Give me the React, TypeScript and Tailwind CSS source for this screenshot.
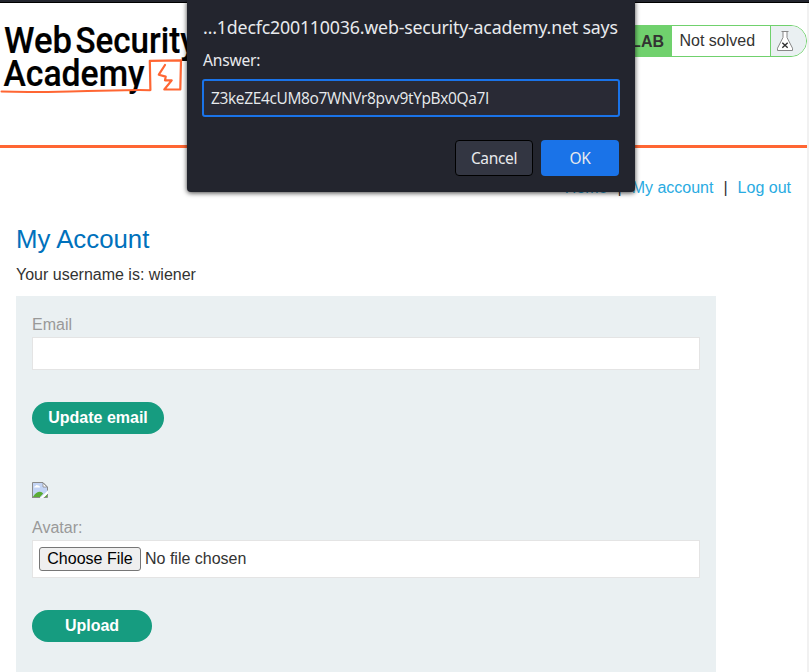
function Logo() {
  return (
    <svg width="190" height="80" viewBox="0 20 190 80" className="block" role="img">
      <g fill="#000" stroke="#000" strokeWidth="0.2" fontFamily="Roboto, sans-serif" fontSize="37" fontWeight="500">
        <text x="4" y="53.1" textLength="68" lengthAdjust="spacingAndGlyphs">Web</text>
        <text x="75.5" y="53.1" textLength="121" lengthAdjust="spacingAndGlyphs">Security</text>
        <text x="3.5" y="85.8" textLength="141" lengthAdjust="spacingAndGlyphs">Academy</text>
      </g>
      <path d="M184 58h5v3h-5z" fill="#000" />
      <g fill="none" stroke="#ff6633" strokeLinejoin="round" strokeLinecap="round">
        <path d="M1.5 91.6 C40 93 70 91 100 90.8 S125 89.8 150 90.2" strokeWidth="2" />
        <path d="M150.4 90 L149.8 60.8 L181 60.3 L180.3 89.4 L164.3 89.5 L171.7 80.4 L165 80.3 L165.7 76.6 L158.8 74.7 L165 65" strokeWidth="2.2" />
      </g>
    </svg>
  );
}

function Flask() {
  return (
    <svg width="18" height="22" viewBox="0 0 18 22" fill="none" stroke="#888" strokeWidth="1">
      <path d="M5.5 1.5h7M7 1.5v6L1.5 18.2v2.3h15v-2.3L11 7.5v-6" fill="#fff" />
      <path d="M6.3 12.8l5.4 5M11.7 12.8l-5.4 5" stroke="#333" strokeWidth="1.4" />
    </svg>
  );
}

function BrokenImage() {
  return (
    <svg width="16" height="16" viewBox="0 0 16 16" className="block">
      <path d="M.5 .5h10.5l4.5 4.5v4L9 15.5H.5z" fill="#c3d4f5" />
      <path d="M2 5.5q0-1.5 1.5-1.5Q4.5 2.2 6 3.5q2-.2 2 2z" fill="#fff" />
      <path d="M1 15.5V14.8Q4.5 9.5 8 9.8q2 .2 3.2 1.8L7.5 15.5z" fill="#5aac35" />
      <path d="M.5 15.5V.5H11l4.5 4.5v3.5M0 15.5H8M11.5 15.5h4v-3.5" fill="none" stroke="#8b8b8b" />
      <path d="M11 1v4h4z" fill="#fff" stroke="#8b8b8b" strokeWidth=".8" />
      <path d="M12.5 15l2.5-2.5V15z" fill="#5aac35" />
      <path d="M8 16l8-7.2v2.4L11 16z" fill="#fff" />
    </svg>
  );
}

function LabStatus() {
  return (
    <div className="flex h-8 w-[206px] overflow-hidden rounded-r-full border border-[#70d16d]">
      <div className="flex w-[70px] items-center justify-end bg-[#70d16d] pt-px pr-2 font-bold">LAB</div>
      <div className="flex w-[98px] items-center bg-white pl-[7.5px]">Not solved</div>
      <div className="flex flex-1 items-center border-l border-[#70d16d] bg-[#eaf0f2] pl-[5px]">
        <Flask />
      </div>
    </div>
  );
}

function Prompt() {
  return (
    <div className="absolute top-0 left-[187px] h-48 w-[448px] rounded-b-[4px] bg-[#23252e] px-4 pt-[15px] font-['Noto_Sans',sans-serif] text-[#e8eaed] shadow-[0_1px_5px_rgba(0,0,0,0.75)]">
      <div className="h-6 text-[17.8px] leading-6 tracking-[-0.2px] whitespace-nowrap">…1decfc200110036.web-security-academy.net says</div>
      <div className="mt-[11px] h-5 text-[15.6px] leading-5 tracking-[-0.2px]">Answer:</div>
      <div className="-mx-px mt-[9px] flex h-[38px] items-center rounded-[3px] border-2 border-[#1a73e8] bg-[#292a35] px-[7px] font-['Open_Sans',sans-serif] text-[15.5px] leading-5 tracking-[-0.36px]">
        Z3keZE4cUM8o7WNVr8pvv9tYpBx0Qa7I
      </div>
      <div className="mt-[23px] flex justify-end gap-2 text-[15.5px] leading-5 tracking-[-0.35px]">
        <button className="h-9 w-[78px] rounded-[4px] border border-black bg-[#333642]">Cancel</button>
        <button className="h-9 w-[78px] rounded-[4px] bg-[#1a73e8]">OK</button>
      </div>
    </div>
  );
}

export default function App() {
  return (
    <div className="relative flex h-[672px] w-[809px] flex-col overflow-hidden bg-white font-['Liberation_Sans',Arial,sans-serif] text-base leading-5 text-[#333332]">
      <div className="h-[3px] shrink-0 border-b border-black bg-[#23252e]" />
      <div className="flex min-h-0 flex-1">
        <div className="flex w-[807px] flex-col">
          <header className="flex h-[145px] shrink-0 justify-between border-b-[3px] border-[#ff6633]">
            <div className="pt-[17px]"><Logo /></div>
            <div className="pt-[22px]"><LabStatus /></div>
          </header>
          <nav className="flex h-[79px] shrink-0 items-start justify-end pt-[30px] pr-4 text-[#29abe2]">
            <a>Home</a>
            <span className="px-[10px] text-[#333332]">|</span>
            <a>My account</a>
            <span className="px-[10px] text-[#333332]">|</span>
            <a>Log out</a>
          </nav>
          <main className="flex min-h-0 flex-1 flex-col pl-4">
            <h1 className="h-6 text-[25.8px] leading-6 text-[#0071bc]">My Account</h1>
            <p className="mt-[14px] h-5">Your username is: wiener</p>
            <section className="mt-[11px] flex w-[700px] flex-1 flex-col items-start bg-[#eaf0f2] px-4 pt-[19px]">
              <label className="h-5 text-[#999]">Email</label>
              <div className="mt-0.5 h-[33px] w-full border border-[#e4e4e4] bg-white" />
              <button className="mt-8 h-8 w-[132px] rounded-full bg-[#169c80] font-bold text-white">Update email</button>
              <div className="mt-12"><BrokenImage /></div>
              <label className="mt-5 h-5 text-[#999]">Avatar:</label>
              <div className="mt-0.5 flex h-[38px] w-full items-center gap-1 border border-[#e4e4e4] bg-white px-1.5">
                <button className="h-6 w-[102px] rounded-[3px] border border-[#767676] bg-[#efefef] text-black">Choose File</button>
                <span>No file chosen</span>
              </div>
              <button className="mt-8 h-8 w-[120px] shrink-0 rounded-full bg-[#169c80] font-bold text-white">Upload</button>
            </section>
          </main>
        </div>
        <div className="w-0.5 bg-[#f1f1f1]" />
      </div>
      <Prompt />
    </div>
  );
}
